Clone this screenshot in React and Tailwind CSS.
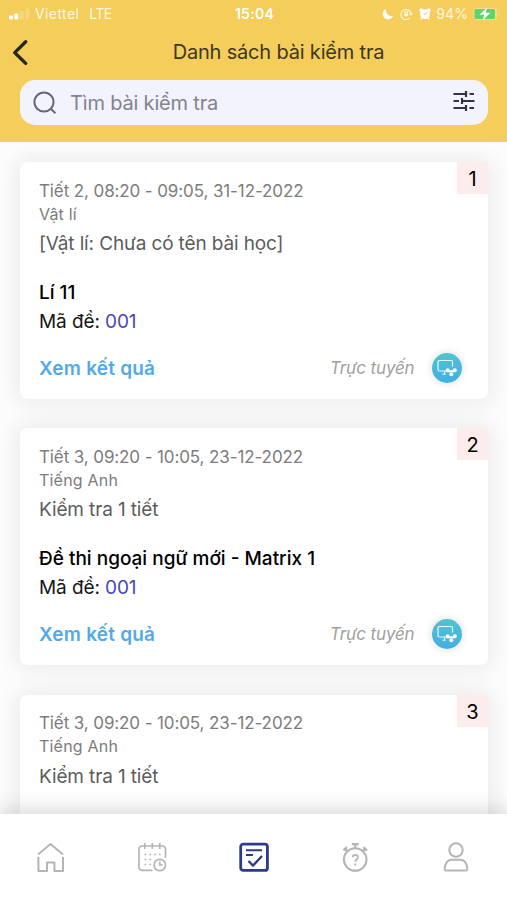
const exams = [
	{ id: 1, time: 'Tiết 2, 08:20 - 09:05, 31-12-2022', subject: 'Vật lí', lesson: '[Vật lí: Chưa có tên bài học]', title: 'Lí 11', code: '001' },
	{ id: 2, time: 'Tiết 3, 09:20 - 10:05, 23-12-2022', subject: 'Tiếng Anh', lesson: 'Kiểm tra 1 tiết', title: 'Đề thi ngoại ngữ mới - Matrix 1', code: '001' },
	{ id: 3, time: 'Tiết 3, 09:20 - 10:05, 23-12-2022', subject: 'Tiếng Anh', lesson: 'Kiểm tra 1 tiết', title: 'Đề', code: '' },
]

function StatusBar() {
	return (
		<div className="grid h-7 grid-cols-3 items-center pl-[9px] pr-[6px] text-[14px] leading-7 text-[#fff8e2]">
			<div className="flex items-center">
				<svg width="21" height="12" viewBox="0 0 21 12" fill="#fff">
					<rect x="0" y="7.5" width="4" height="4" rx="1" />
					<rect x="5.3" y="5.5" width="4" height="6" rx="1" />
					<rect x="10.8" y="3" width="4" height="8.5" rx="1" opacity=".2" />
					<rect x="16.3" y="0.5" width="4" height="11" rx="1" opacity=".2" />
				</svg>
				<span className="ml-[5px] tracking-[0.4px]">Viettel</span>
				<span className="ml-[10px] tracking-[-0.6px]">LTE</span>
			</div>
			<div className="text-center font-semibold tracking-[0.3px] text-white"><span className="ml-[-1px]">15:04</span></div>
			<div className="flex items-center justify-end">
				<svg width="12" height="12" viewBox="0 0 12 12" fill="#fff">
					<path d="M4 .8a5.5 5.5 0 1 0 7.2 7.2A6 6 0 0 1 4 .8Z" />
				</svg>
				<svg className="ml-[6px]" width="13" height="12" viewBox="0 0 13 12" fill="none" stroke="#fff8e2" strokeWidth="1.1">
					<path d="M9.6 10.2A5.1 5.1 0 1 1 11.1 6" />
					<path d="M9.5 5.2 11.2 7l1.3-1.9" />
					<rect x="4.2" y="5.3" width="4" height="3" fill="#fff8e2" stroke="none" />
					<path d="M4.9 5.5V4.3a1.3 1.3 0 0 1 2.6 0v1.2" />
				</svg>
				<svg className="ml-[6px]" width="12" height="12" viewBox="0 0 12 12">
					<circle cx="6" cy="6.3" r="5" fill="#fff" />
					<circle cx="2.2" cy="2.2" r="1.9" fill="#fff" />
					<circle cx="9.8" cy="2.2" r="1.9" fill="#fff" />
					<path d="M2.6 10 1.6 11.5M9.4 10l1 1.5" stroke="#fff" strokeWidth="1.3" />
					<path d="M7.7 4 6 6.8 4.5 6" stroke="#eec64e" strokeWidth=".9" fill="none" />
				</svg>
				<span className="ml-[5px] tracking-[0.1px]">94%</span>
				<svg className="ml-[5px]" width="28" height="14" viewBox="0 0 28 14">
					<rect x=".5" y="1" width="23.5" height="12" rx="3" fill="#f7dc8b" />
					<rect x="1.5" y="2" width="20.5" height="10" rx="1.5" fill="#62d26a" />
					<path d="M25.3 4.8c1.6.6 1.6 3.8 0 4.4Z" fill="#f7dc8b" />
					<path d="M14.2.2 6.5 7.8h4.7L9.5 13.8l7.9-8h-4.8Z" fill="#fff" />
				</svg>
			</div>
		</div>
	)
}

function Header() {
	return (
		<header className="h-[142px] shrink-0 bg-[#f4cd5a]">
			<StatusBar />
			<div className="grid h-[48px] grid-cols-[50px_1fr] items-center">
				<svg className="ml-[12px]" width="17" height="27" viewBox="0 0 17 27" fill="none" stroke="#272622" strokeWidth="3.4" strokeLinecap="round" strokeLinejoin="round">
					<path d="M13.7 2.7 2.7 13.6l11 10.8" />
				</svg>
				<h1 className="text-center text-[20px] leading-[48px] tracking-[-0.18px] text-[#3e3723]">Danh sách bài kiểm tra</h1>
			</div>
			<div className="ml-[20px] mr-[19px] mt-[4px] flex h-[45px] items-center rounded-[15px] bg-[#f2f3fd] pl-[13px] pr-[13px]">
				<svg width="24" height="24" viewBox="0 0 24 24" fill="none" stroke="#66676f" strokeWidth="2">
					<circle cx="11" cy="11" r="9.6" />
					<path d="m17.8 17.8 4.6 4.4" />
				</svg>
				<span className="ml-[13px] flex-1 pt-px text-[20px] tracking-[-0.18px] text-[#82838c]">Tìm bài kiểm tra</span>
				<svg className="mb-[3px]" width="22" height="22" viewBox="0 0 22 22" stroke="#33343c" strokeWidth="2.2">
					<path d="M.5 4H13M16.5 4H21M.5 11H6M9 11h12.5M.5 18H13M16.5 18H21M13 1v6M9 8v6M13 15v6" />
				</svg>
			</div>
		</header>
	)
}

function OnlineIcon() {
	return (
		<div className="ml-[17px] flex size-[30px] items-center justify-center rounded-full bg-gradient-to-b from-[#52c4cf] to-[#43aee4] shadow-[0_0_6px_2px_rgba(0,0,0,0.09)]">
			<svg width="22" height="20" viewBox="0 0 22 20" fill="none" stroke="#eafaff" strokeWidth="1.2">
				<path d="M6.5 13H3.5a1.5 1.5 0 0 1-1.5-1.5V4a1.5 1.5 0 0 1 1.5-1.5h11.5a1.5 1.5 0 0 1 1.5 1.5v4.5M6.5 13h2.3v3.2H6.5" />
				<circle cx="11.6" cy="12.2" r="2" fill="#fff" stroke="none" />
				<circle cx="18.8" cy="12.2" r="2" fill="#fff" stroke="none" />
				<path d="M11.6 13.3h7.2" strokeWidth="2" stroke="#fff" />
				<circle cx="15.3" cy="16.2" r="2" fill="#fff" stroke="none" />
			</svg>
		</div>
	)
}

function ExamCard({ exam }) {
	return (
		<div className="relative h-[236.7px] shrink-0 rounded-[8px] bg-white px-[19px] pt-[16.5px] shadow-[0_0_22px_4px_rgba(0,0,0,0.07)]">
			<div className="absolute right-0 top-0 flex h-8 w-[31px] items-center justify-center rounded-tr-[3px] bg-[#fdecec] pt-[2px] text-[20px] text-black">{exam.id}</div>
			<p className="text-[17px] leading-6 tracking-[-0.11px] text-[#7c7c7c]">{exam.time}</p>
			<p className="text-[16px] leading-[23px] tracking-[0.2px] text-[#7c7c7c]">{exam.subject}</p>
			<p className="mt-[3.5px] text-[19px] leading-[30px] tracking-[-0.13px] text-[#5c5c5c]">{exam.lesson}</p>
			<h2 className="mt-[19px] text-[19px] font-medium leading-[30px] text-black">{exam.title}</h2>
			<p className="text-[19px] leading-[28px] tracking-[-0.1px] text-[#161616]">{exam.code && 'Mã đề: '}<span className="text-[#4747bd]">{exam.code}</span></p>
			{exam.code && (
				<div className="mt-[14px] flex h-9 items-center pr-[7.5px]">
					<a href="#" className="mr-auto pt-[2px] text-[19px] font-semibold tracking-[0.22px] text-[#52a9e9]">Xem kết quả</a>
					<span className="pt-px text-[17px] italic tracking-[-0.15px] text-[#a0a0a0]">Trực tuyến</span>
					<OnlineIcon />
				</div>
			)}
		</div>
	)
}

function TabBar() {
	return (
		<nav className="relative flex h-[86px] shrink-0 justify-between bg-white px-[35px] pt-[27px] shadow-[0_-2px_20px_2px_rgba(0,0,0,0.15)]">
			<svg width="32" height="32" viewBox="0 0 32 32" fill="none" stroke="#b5b5b5" strokeWidth="2" strokeLinejoin="round">
				<path d="M3 13.5 15.5 3 28 13.5M3.4 16v14H12v-8.5h7.4V30H28V16" />
			</svg>
			<svg width="32" height="32" viewBox="0 0 32 32" fill="none" stroke="#b5b5b5" strokeWidth="1.7">
				<path d="M16.5 29.3H6a3 3 0 0 1-3-3V8a3 3 0 0 1 3-3h20.5a3 3 0 0 1 3 3v9M8.8 2v6M16.3 2v6M23.8 2v6" />
				<path d="M8.5 13.5h16.2M8.5 18.5h6.7M8.5 23.5h6.7" strokeDasharray="1.7 3.13" />
				<circle cx="23.8" cy="24" r="5.7" />
				<path d="M23.8 20.5V24h3" />
			</svg>
			<svg width="34" height="32" viewBox="0 0 34 32" fill="none" stroke="#2d3a8e" strokeWidth="2.8" strokeLinejoin="round">
				<rect x="3.7" y="3.2" width="26.7" height="26.2" rx="2.5" />
				<path d="M9 9.2h16M9 14h7" strokeWidth="1.9" />
				<path d="m11.5 20 4.5 4.6 9-9.6" strokeWidth="2.3" />
			</svg>
			<svg width="32" height="32" viewBox="0 0 32 32" fill="none" stroke="#b5b5b5" strokeWidth="2">
				<circle cx="16.2" cy="18.5" r="11.3" />
				<path d="M12.8 3.2h6.8M16.2 3v4.5M4.5 9.3l3.5-3.2M24.4 6.1l3.5 3.2M6.2 7.7l2.4 2.8M26.2 7.7l-2.4 2.8" strokeWidth="2.3" />
				<path d="M13.7 16.3c0-3.3 5.2-3.3 5.2 0 0 2.1-2.6 2.2-2.6 4.5M16.3 22.4v2" strokeWidth="1.9" />
			</svg>
			<svg width="32" height="32" viewBox="0 0 32 32" fill="none" stroke="#b5b5b5" strokeWidth="2">
				<circle cx="16" cy="9" r="6.7" />
				<path d="M4.7 28.4c-.3-5.2 2.6-9.6 7.3-9.6h8c4.7 0 7.6 4.4 7.3 9.6-.1.9-.6 1.2-1.3 1.2H6c-.7 0-1.2-.3-1.3-1.2Z" />
			</svg>
		</nav>
	)
}

export default function App() {
	return (
		<div className="flex h-screen w-full flex-col overflow-hidden bg-[#fcfcfc] font-['Inter','Noto_Sans',sans-serif]">
			<Header />
			<main className="flex min-h-0 flex-1 flex-col gap-[29.6px] overflow-hidden pl-[20px] pr-[19px] pt-[20px]">
				{exams.map((exam) => (
					<ExamCard key={exam.id} exam={exam} />
				))}
			</main>
			<TabBar />
		</div>
	)
}
